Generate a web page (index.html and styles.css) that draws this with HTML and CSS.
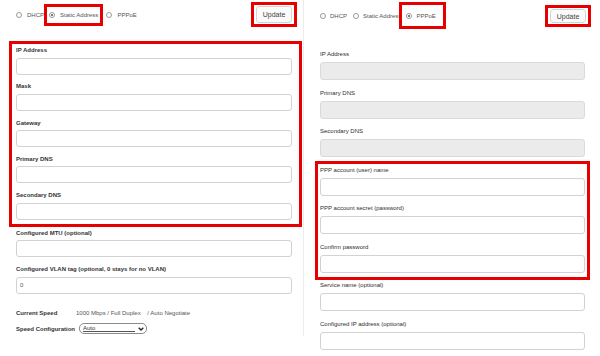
FILE: index.html
```html
<!DOCTYPE html>
<html lang="en">
<head>
  <meta charset="UTF-8" />
  <meta name="viewport" content="width=device-width, initial-scale=1.0"/>
  <title>WAN Settings</title>
  <link rel="stylesheet" href="styles.css">
</head>
<body>
  <div class="page">

    <!-- Static address mode -->
    <section class="panel panel-static">
      <div class="top-row">
        <div class="modes">
          <label class="mode"><span class="radio"></span>DHCP</label>
          <label class="mode mode-marked"><span class="radio checked"></span>Static Address</label>
          <label class="mode"><span class="radio"></span>PPPoE</label>
        </div>
        <span class="mark"><button class="btn-update">Update</button></span>
      </div>

      <div class="group">
        <div class="field"><div class="field-label">IP Address</div><input class="field-input" type="text"></div>
        <div class="field"><div class="field-label">Mask</div><input class="field-input" type="text"></div>
        <div class="field"><div class="field-label">Gateway</div><input class="field-input" type="text"></div>
        <div class="field"><div class="field-label">Primary DNS</div><input class="field-input" type="text"></div>
        <div class="field"><div class="field-label">Secondary DNS</div><input class="field-input" type="text"></div>
      </div>

      <div class="field"><div class="field-label">Configured MTU (optional)</div><input class="field-input" type="text"></div>
      <div class="field"><div class="field-label">Configured VLAN tag (optional, 0 stays for no VLAN)</div><input class="field-input" type="text" value="0"></div>

      <div class="info-row speed-row">
        <span class="info-label">Current Speed</span>
        <span class="info-value">1000 Mbps / Full Duplex &nbsp;&nbsp; / Auto Negotiate</span>
      </div>
      <div class="info-row config-row">
        <span class="info-label">Speed Configuration</span>
        <div class="fake-select">
          <span class="fake-select-text">Auto</span>
          <svg class="chevron" width="6" height="4" viewBox="0 0 6 4"><path d="M0.7 0.7 L3 3 L5.3 0.7" fill="none" stroke="#222" stroke-width="1.3"/></svg>
        </div>
      </div>
    </section>

    <!-- PPPoE mode -->
    <section class="panel panel-pppoe">
      <div class="top-row">
        <div class="modes">
          <label class="mode"><span class="radio"></span>DHCP</label>
          <label class="mode mode-tight"><span class="radio"></span>Static Address</label>
          <label class="mode mode-marked"><span class="radio checked"></span>PPPoE</label>
        </div>
        <span class="mark"><button class="btn-update">Update</button></span>
      </div>

      <div class="field"><div class="field-label">IP Address</div><input class="field-input" type="text" disabled></div>
      <div class="field"><div class="field-label">Primary DNS</div><input class="field-input" type="text" disabled></div>
      <div class="field"><div class="field-label">Secondary DNS</div><input class="field-input" type="text" disabled></div>

      <div class="group">
        <div class="field"><div class="field-label">PPP account (user) name</div><input class="field-input" type="text"></div>
        <div class="field"><div class="field-label">PPP account secret (password)</div><input class="field-input" type="password"></div>
        <div class="field"><div class="field-label">Confirm password</div><input class="field-input" type="password"></div>
      </div>

      <div class="field"><div class="field-label">Service name (optional)</div><input class="field-input" type="text"></div>
      <div class="field"><div class="field-label">Configured IP address (optional)</div><input class="field-input" type="text"></div>
    </section>

  </div>
</body>
</html>
```

FILE: styles.css
```css
body {
  margin: 0;
  background: #fff;
  font-family: "Liberation Sans", Arial, sans-serif;
  color: #333;
}
.page {
  display: flex;
  align-items: flex-start;
  width: 600px;
  height: 356px;
  overflow: hidden;
}

/* panels */
.panel {
  box-sizing: border-box;
}
.panel-static {
  width: 304px;
  padding: 6px 11px 2px 16px;
  border-right: 1px solid #ececec;
}
.panel-pppoe {
  width: 296px;
  padding: 9px 15px 0 16px;
}

/* top row: radios + update */
.top-row {
  display: flex;
  justify-content: space-between;
  align-items: center;
  height: 17px;
}
.panel-pppoe .top-row {
  height: 14px;
  margin-bottom: 27px;
}
.modes {
  display: flex;
  align-items: center;
}
.mode {
  display: flex;
  align-items: center;
  gap: 5px;
  margin-right: 4px;
  font-size: 6px;
  line-height: 8px;
  color: #555;
}
.radio {
  width: 6px;
  height: 6px;
  box-sizing: border-box;
  border: 1px solid #9a9a9a;
  border-radius: 50%;
  background: #fff;
  position: relative;
}
.radio.checked::after {
  content: "";
  position: absolute;
  left: 1px;
  top: 1px;
  width: 2px;
  height: 2px;
  border-radius: 50%;
  background: #555;
}
.mode-marked {
  padding: 4px 2px;
  outline: 3px solid #e60000;
}
.panel-static .mode-marked {
  margin-left: -1px;
  margin-right: 6px;
}
.panel-pppoe .mode {
  margin-right: 6px;
  gap: 4px;
}
.panel-pppoe .mode-tight {
  margin-right: 1px;
}
.panel-pppoe .mode-marked {
  padding: 7px 7px 6px 4px;
  margin-top: -7px;
  margin-bottom: -5px;
}

/* update button with its square marker */
.mark {
  display: flex;
  padding: 1px 2px;
  margin: -1px -2px -1px 0;
  outline: 3px solid #e60000;
}
.panel-pppoe .mark {
  margin-right: -3px;
}
.btn-update {
  width: 36px;
  height: 17px;
  padding: 0;
  font-family: "Liberation Sans", Arial, sans-serif;
  font-size: 7px;
  color: #444;
  background: #fbfbfb;
  border: 1px solid #d4d4d4;
  border-radius: 3px;
}
.panel-pppoe .btn-update {
  height: 14px;
}

/* fields */
.field {
  margin-bottom: 7.8px;
}
.field-label {
  font-size: 6px;
  line-height: 8px;
  font-weight: bold;
  color: #333;
  margin-bottom: 3.5px;
  white-space: nowrap;
}
.field-input {
  display: block;
  box-sizing: border-box;
  width: 100%;
  height: 17px;
  margin: 0;
  padding: 0 3px;
  font-family: "Liberation Sans", Arial, sans-serif;
  font-size: 6px;
  color: #555;
  background: #fff;
  border: 1px solid #d2d2d2;
  border-radius: 3px;
}
.field-input:disabled {
  background: #ebebeb;
  border-color: #dadada;
}

.panel-pppoe .field {
  margin-bottom: 8.5px;
}
.panel-pppoe .field-label {
  font-weight: normal;
  color: #2e2e2e;
  margin-bottom: 4px;
}
.panel-pppoe .field-input {
  height: 18px;
}

/* marked groups */
.group {
  outline: 3px solid #e60000;
}
.panel-static .group {
  margin: 21px -7px 5px -4px;
  padding: 2px 7px 4.3px 4px;
}
.panel-static .group .field:last-child {
  margin-bottom: 0;
}
.panel-pppoe .group {
  margin: -2px -2px 4px;
  padding: 2px 2px 4.5px;
}
.panel-pppoe .group .field:last-child {
  margin-bottom: 0;
}

/* speed info */
.info-row {
  display: flex;
  align-items: center;
  font-size: 6px;
  line-height: 8px;
}
.info-label {
  font-weight: bold;
  color: #333;
}
.speed-row {
  margin-top: 15.2px;
}
.speed-row .info-label {
  width: 60px;
}
.info-value {
  color: #555;
}
.config-row {
  margin-top: 6.5px;
}
.fake-select {
  display: flex;
  align-items: center;
  justify-content: space-between;
  box-sizing: border-box;
  width: 68px;
  height: 11px;
  margin-left: 4px;
  padding: 0 2px 0 3px;
  border: 1px solid #8a8a8a;
  border-radius: 5px;
  color: #333;
}
.fake-select-text {
  flex: 1;
  margin-right: 3px;
  border-bottom: 1px solid #555;
  line-height: 6px;
}
.chevron {
  display: block;
}
```
